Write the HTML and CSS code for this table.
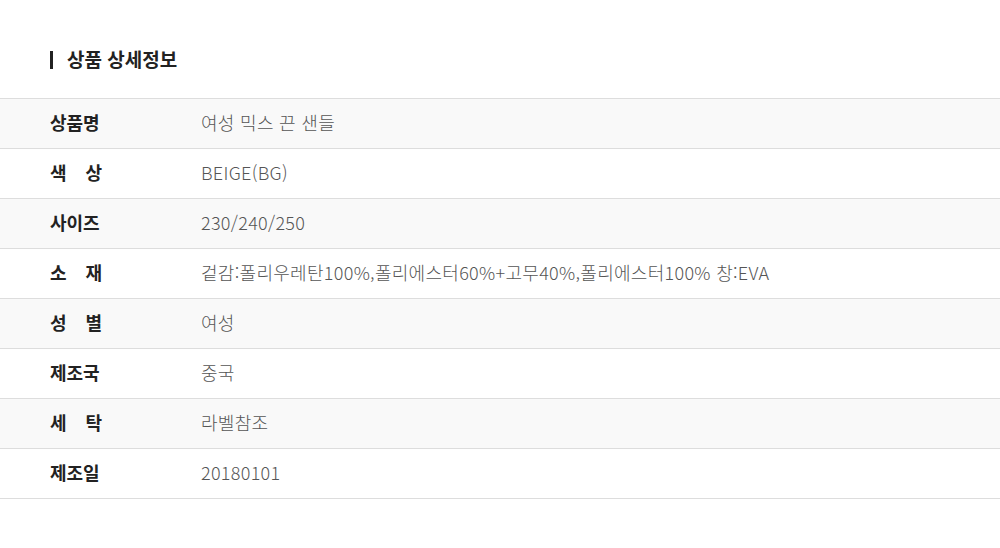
FILE: index.html
```html
<!DOCTYPE html>
<html lang="ko">
<head>
    <meta charset="UTF-8">
    <title>상품 상세정보</title>
    <link rel="stylesheet" href="styles.css">
</head>
<body>
    <div class="detail">
        <h2 class="detail-title">상품 상세정보</h2>
        <div class="info-table">
            <div class="info-row">
                <div class="info-label">상품명</div>
                <div class="info-value">여성 믹스 끈 샌들</div>
            </div>
            <div class="info-row">
                <div class="info-label spaced">색 상</div>
                <div class="info-value">BEIGE(BG)</div>
            </div>
            <div class="info-row">
                <div class="info-label">사이즈</div>
                <div class="info-value">230/240/250</div>
            </div>
            <div class="info-row">
                <div class="info-label spaced">소 재</div>
                <div class="info-value">겉감:폴리우레탄100%,폴리에스터60%+고무40%,폴리에스터100% 창:EVA</div>
            </div>
            <div class="info-row">
                <div class="info-label spaced">성 별</div>
                <div class="info-value">여성</div>
            </div>
            <div class="info-row">
                <div class="info-label">제조국</div>
                <div class="info-value">중국</div>
            </div>
            <div class="info-row">
                <div class="info-label spaced">세 탁</div>
                <div class="info-value">라벨참조</div>
            </div>
            <div class="info-row">
                <div class="info-label">제조일</div>
                <div class="info-value">20180101</div>
            </div>
        </div>
    </div>
</body>
</html>
```

FILE: styles.css
```css
body {
    font-family: "Noto Sans CJK KR", "Noto Sans", sans-serif;
    background-color: white;
    margin: 0;
    padding: 0;
}
.detail {
    padding-top: 51px;
}
.detail-title {
    display: flex;
    align-items: center;
    height: 18px;
    margin: 0 0 29px 50px;
    padding: 0 0 2px 14px;
    border-left: 3px solid #222;
    font-size: 19px;
    line-height: 18px;
    font-weight: bold;
    color: #222;
    box-sizing: border-box;
    height: 18px;
}
.info-table {
    border-bottom: 1px solid #ddd;
}
.info-row {
    display: flex;
    align-items: center;
    height: 46px;
    padding-bottom: 3px;
    border-top: 1px solid #ddd;
}
.info-row:nth-child(odd) {
    background-color: #f9f9f9;
}
.info-label {
    width: 52px;
    margin-left: 50px;
    margin-right: 99px;
    font-size: 18px;
    font-weight: bold;
    color: #222;
    white-space: nowrap;
}
.info-label.spaced {
    text-align: justify;
    text-align-last: justify;
}
.info-value {
    font-size: 18px;
    font-weight: 300;
    letter-spacing: 0.3px;
    color: #555;
}
```
